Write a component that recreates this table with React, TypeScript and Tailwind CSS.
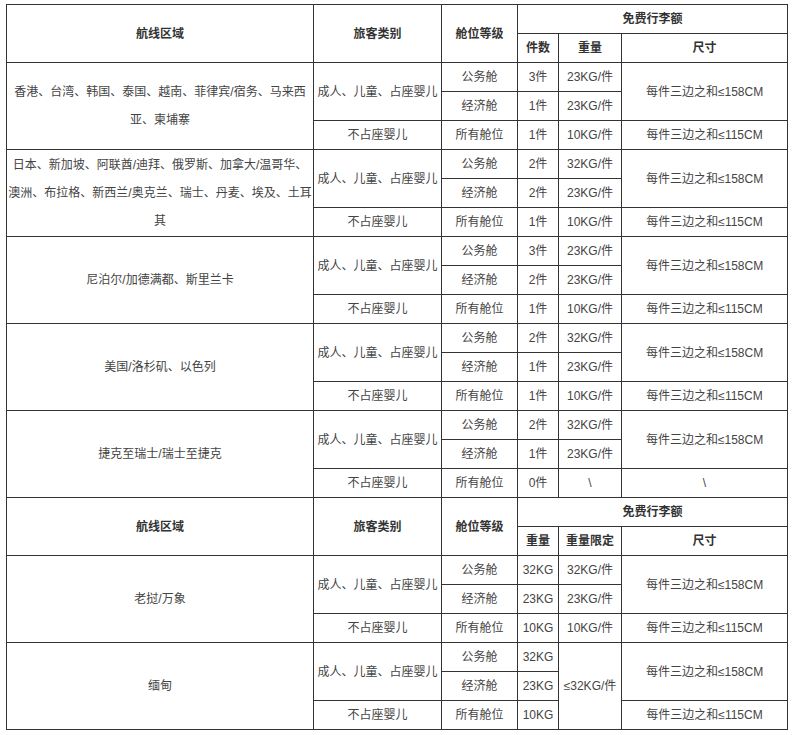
import React from "react";

const td = "border border-[#333] p-0 text-center align-middle";
const th = "border border-[#333] p-0 text-center align-middle font-bold text-[#333]";

type Row = { cls: string; cnt: string; wt: string };
type Group = { route: React.ReactNode; rows: [Row, Row, Row]; third?: [string, string] };

const groups: Group[] = [
  {
    route: (
      <>
        香港、台湾、韩国、泰国、越南、菲律宾/宿务、马来西
        <br />
        亚、柬埔寨
      </>
    ),
    rows: [
      { cls: "公务舱", cnt: "3件", wt: "23KG/件" },
      { cls: "经济舱", cnt: "1件", wt: "23KG/件" },
      { cls: "所有舱位", cnt: "1件", wt: "10KG/件" },
    ],
  },
  {
    route: (
      <>
        日本、新加坡、阿联酋/迪拜、俄罗斯、加拿大/温哥华、
        <br />
        澳洲、布拉格、新西兰/奥克兰、瑞士、丹麦、埃及、土耳
        <br />其
      </>
    ),
    rows: [
      { cls: "公务舱", cnt: "2件", wt: "32KG/件" },
      { cls: "经济舱", cnt: "2件", wt: "23KG/件" },
      { cls: "所有舱位", cnt: "1件", wt: "10KG/件" },
    ],
  },
  {
    route: "尼泊尔/加德满都、斯里兰卡",
    rows: [
      { cls: "公务舱", cnt: "3件", wt: "23KG/件" },
      { cls: "经济舱", cnt: "2件", wt: "23KG/件" },
      { cls: "所有舱位", cnt: "1件", wt: "10KG/件" },
    ],
  },
  {
    route: "美国/洛杉矶、以色列",
    rows: [
      { cls: "公务舱", cnt: "2件", wt: "32KG/件" },
      { cls: "经济舱", cnt: "1件", wt: "23KG/件" },
      { cls: "所有舱位", cnt: "1件", wt: "10KG/件" },
    ],
  },
  {
    route: "捷克至瑞士/瑞士至捷克",
    rows: [
      { cls: "公务舱", cnt: "2件", wt: "32KG/件" },
      { cls: "经济舱", cnt: "1件", wt: "23KG/件" },
      { cls: "所有舱位", cnt: "0件", wt: "\\" },
    ],
    third: ["\\", ""],
  },
];

function Header({ a, b }: { a: string; b: string }) {
  return (
    <>
      <tr>
        <th rowSpan={2} className={th}>航线区域</th>
        <th rowSpan={2} className={th}>旅客类别</th>
        <th rowSpan={2} className={th}>舱位等级</th>
        <th colSpan={3} className={th}>免费行李额</th>
      </tr>
      <tr>
        <th className={th}>{a}</th>
        <th className={th}>{b}</th>
        <th className={th}>尺寸</th>
      </tr>
    </>
  );
}

export default function App() {
  return (
    <div className="bg-white w-[792px] h-[735px] pt-[4px] pl-[6px]">
      <table
        className="border-collapse table-fixed w-[781px] text-[12px] leading-[28px] text-[#444]"
        style={{ fontFamily: '"Liberation Sans", "Noto Sans CJK SC", sans-serif' }}
      >
        <colgroup>
          <col className="w-[307px]" />
          <col className="w-[128px]" />
          <col className="w-[76px]" />
          <col className="w-[41px]" />
          <col className="w-[63px]" />
          <col className="w-[166px]" />
        </colgroup>
        <tbody>
          <Header a="件数" b="重量" />
          {groups.map((g, i) => (
            <React.Fragment key={i}>
              <tr>
                <td rowSpan={3} className={td}>{g.route}</td>
                <td rowSpan={2} className={td}>成人、儿童、占座婴儿</td>
                <td className={td}>{g.rows[0].cls}</td>
                <td className={td}>{g.rows[0].cnt}</td>
                <td className={td}>{g.rows[0].wt}</td>
                <td rowSpan={2} className={td}>每件三边之和≤158CM</td>
              </tr>
              <tr>
                <td className={td}>{g.rows[1].cls}</td>
                <td className={td}>{g.rows[1].cnt}</td>
                <td className={td}>{g.rows[1].wt}</td>
              </tr>
              <tr>
                <td className={td}>不占座婴儿</td>
                <td className={td}>{g.rows[2].cls}</td>
                <td className={td}>{g.rows[2].cnt}</td>
                <td className={td}>{g.rows[2].wt}</td>
                <td className={td}>{g.third ? "\\" : "每件三边之和≤115CM"}</td>
              </tr>
            </React.Fragment>
          ))}
          <Header a="重量" b="重量限定" />
          <tr>
            <td rowSpan={3} className={td}>老挝/万象</td>
            <td rowSpan={2} className={td}>成人、儿童、占座婴儿</td>
            <td className={td}>公务舱</td>
            <td className={td}>32KG</td>
            <td className={td}>32KG/件</td>
            <td rowSpan={2} className={td}>每件三边之和≤158CM</td>
          </tr>
          <tr>
            <td className={td}>经济舱</td>
            <td className={td}>23KG</td>
            <td className={td}>23KG/件</td>
          </tr>
          <tr>
            <td className={td}>不占座婴儿</td>
            <td className={td}>所有舱位</td>
            <td className={td}>10KG</td>
            <td className={td}>10KG/件</td>
            <td className={td}>每件三边之和≤115CM</td>
          </tr>
          <tr>
            <td rowSpan={3} className={td}>缅甸</td>
            <td rowSpan={2} className={td}>成人、儿童、占座婴儿</td>
            <td className={td}>公务舱</td>
            <td className={td}>32KG</td>
            <td rowSpan={3} className={td}>≤32KG/件</td>
            <td rowSpan={2} className={td}>每件三边之和≤158CM</td>
          </tr>
          <tr>
            <td className={td}>经济舱</td>
            <td className={td}>23KG</td>
          </tr>
          <tr>
            <td className={td}>不占座婴儿</td>
            <td className={td}>所有舱位</td>
            <td className={td}>10KG</td>
            <td className={td}>每件三边之和≤115CM</td>
          </tr>
        </tbody>
      </table>
    </div>
  );
}
